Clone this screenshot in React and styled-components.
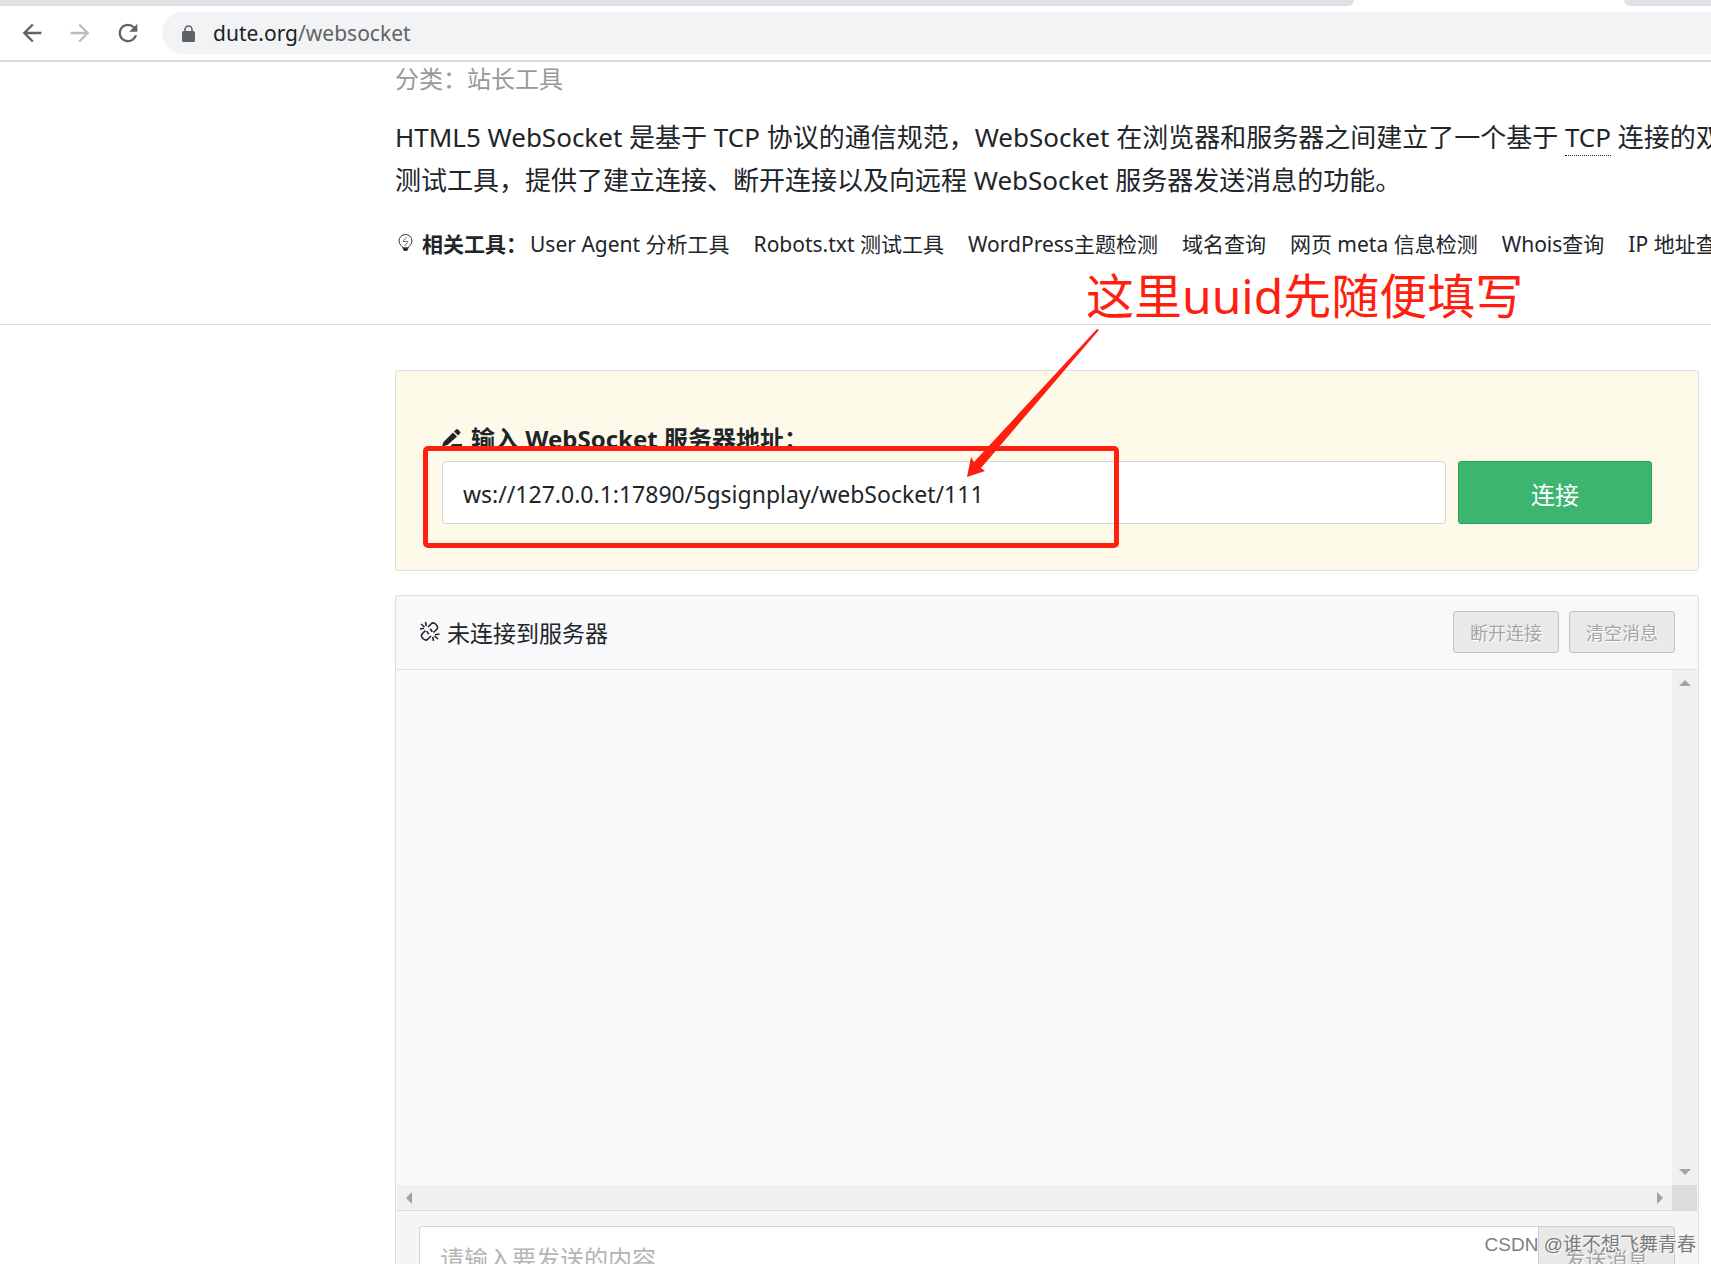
import React, { useState } from "react";
import styled, { createGlobalStyle } from "styled-components";
import { MdArrowBack, MdArrowForward, MdRefresh } from "react-icons/md";

const GlobalStyle = createGlobalStyle`
  * {
    box-sizing: border-box;
  }

  body {
    margin: 0;
    color: #212529;
    background: #fff;
    font-family: "Noto Sans", "Noto Sans CJK SC", sans-serif;
    font-size: 24px;
  }

  button,
  input {
    font-family: inherit;
  }

  svg {
    flex: none;
  }
`;

const Window = styled.div`
  display: flex;
  flex-direction: column;
  height: 100vh;
  overflow: hidden;
  position: relative;
`;

const TabStrip = styled.div`
  display: flex;
  flex: none;
  height: 6px;
  justify-content: space-between;
`;

const TabEdge = styled.div`
  background: #dee1e6;
  width: ${({ $last }) => ($last ? "87px" : "auto")};
  flex: ${({ $last }) => ($last ? "none" : "1")};
  margin-right: ${({ $last }) => ($last ? "0" : "270px")};
  border-radius: ${({ $last }) => ($last ? "0 0 0 8px" : "0 0 8px 0")};
`;

const Toolbar = styled.header`
  display: flex;
  flex: none;
  align-items: center;
  height: 56px;
  padding-left: 18px;
  border-bottom: 2px solid #dadbdc;
`;

const NavButton = styled.button`
  display: flex;
  padding: 0;
  margin-right: 20px;
  border: 0;
  background: none;
  color: ${({ disabled }) => (disabled ? "#babcbe" : "#5f6368")};
`;

const AddressBar = styled.div`
  display: flex;
  flex: 1;
  align-items: center;
  gap: 18px;
  height: 42px;
  padding-left: 20px;
  border-radius: 21px 0 0 21px;
  background: #f1f3f4;
  color: #5f6368;
  font-size: 21px;
`;

const Address = styled.div`
  & b {
    color: #202124;
    font-weight: 400;
  }
`;

const Page = styled.main`
  flex: none;
`;

const Intro = styled.section`
  height: 263px;
  padding-left: 395px;
  border-bottom: 1px solid #dcdcdc;
  overflow: hidden;
  white-space: nowrap;
`;

const Category = styled.div`
  line-height: 34px;
  color: #999;
`;

const Description = styled.p`
  margin: 20px 0;
  font-size: 26px;
  line-height: 43px;

  & abbr {
    border-bottom: 1px dotted #212529;
    text-decoration: none;
  }
`;

const Related = styled.nav`
  display: flex;
  align-items: center;
  height: 42px;
  font-size: 21px;

  & strong {
    margin: 0 3px 0 7px;
  }
`;

const ToolLink = styled.a`
  margin-right: 24px;
  color: #212529;
  text-decoration: none;
`;

const Content = styled.div`
  display: flex;
  flex-direction: column;
  gap: 24px;
  padding: 45px 12px 0 395px;
`;

const ConnectPanel = styled.form`
  position: relative;
  padding: 46px;
  border: 1px solid #dcdfe0;
  border-radius: 3px;
  background: #fdfaea;
`;

const AddressLabel = styled.label`
  display: flex;
  align-items: center;
  gap: 9px;
  height: 41px;
  margin-bottom: 3px;
  font-weight: 700;
`;

const Row = styled.div`
  display: flex;
  gap: ${({ $gap }) => $gap || 0}px;
`;

const TextInput = styled.input`
  flex: 1;
  min-width: 0;
  height: 63px;
  padding: 2px 20px 0;
  border: 1px solid #d1d5d9;
  border-radius: 4px;
  background: #fff;
  color: #212529;
  font-size: ${({ $size }) => $size || 24}px;
  outline: none;

  &::placeholder {
    color: #b5b5b5;
  }
`;

const ConnectButton = styled.button`
  width: 194px;
  padding-top: 2px;
  border: 1px solid #22a355;
  border-radius: 3px;
  background: #3cb66e;
  color: #fff;
  font-size: 24px;
`;

const MessagePanel = styled.section`
  padding: 0 1px;
  border: 1px solid #dcdfe0;
  border-radius: 3px;
  background: #f5f5f5;
`;

const PanelHeader = styled.div`
  display: flex;
  align-items: center;
  gap: 10px;
  height: 74px;
  padding: 0 22px 2px;
  border-bottom: 1px solid #dcdfe0;
  background: #f8f9fb;
`;

const Status = styled.div`
  display: flex;
  flex: 1;
  align-items: center;
  gap: 7px;
  font-size: 23px;
`;

const SmallButton = styled.button`
  width: 106px;
  height: 42px;
  padding: 0;
  border: 1px solid #c3c3c3;
  border-radius: 3px;
  background: #e9e9e9;
  color: #a5a5a5;
  font-size: 18px;
  text-shadow: 1px 1px 0 #fff;
`;

const MessageArea = styled.div`
  display: grid;
  grid-template-columns: 1fr 25px;
  grid-template-rows: 515px 26px;
`;

const Messages = styled.div`
  background: #fafafa;
`;

const ScrollTrack = styled.div`
  display: flex;
  flex-direction: ${({ $vertical }) => ($vertical ? "column" : "row")};
  align-items: center;
  justify-content: space-between;
  padding: ${({ $vertical }) => ($vertical ? "10px 0" : "0 9px")};
  border-bottom: ${({ $vertical }) => ($vertical ? "0" : "1px solid #dcdcdc")};
  background: #f0f0f0;
`;

const ScrollCorner = styled.div`
  background: #dcdcdc;
`;

const SendRow = styled.form`
  display: flex;
  padding: 15px 22px;

  & input {
    border-right: 0;
    border-radius: 4px 0 0 4px;
  }
`;

const SendButton = styled.button`
  width: 137px;
  border: 1px solid #c9cccd;
  border-radius: 0 4px 4px 0;
  background: #e9e9e9;
  color: #a5a5a5;
  font-size: 21px;
  text-shadow: 1px 1px 0 #fff;
`;

const Highlight = styled.div`
  position: absolute;
  top: 75px;
  left: 27px;
  width: 696px;
  height: 102px;
  border: 5px solid #ff1f10;
  border-radius: 5px;
  pointer-events: none;
`;

const Note = styled.div`
  position: absolute;
  top: -111px;
  left: 690px;
  color: #ff1f10;
  font-size: 48px;
  line-height: 72px;
  white-space: nowrap;
`;

const Arrow = styled.svg`
  position: absolute;
  top: -42px;
  left: 570px;
  pointer-events: none;
`;

const Watermark = styled.div`
  position: absolute;
  right: 15px;
  bottom: 4px;
  color: rgba(90, 90, 90, 0.8);
  font-family: "Liberation Sans", "Noto Sans CJK SC", sans-serif;
  font-size: 19px;
  line-height: 30px;
  text-shadow: 1px 1px 0 rgba(255, 255, 255, 0.8);
`;

const LockIcon = () => (
  <svg width="13" height="17" viewBox="0 0 13 17" fill="#5f6368">
    <rect y="6" width="13" height="11" rx="1.500" />
    <path
      d="M3 7V4.500a3.500 3.500 0 0 1 7 0V7"
      fill="none"
      stroke="#5f6368"
      strokeWidth="1.600"
    />
  </svg>
);

const BulbIcon = () => (
  <svg width="20" height="20" viewBox="0 0 20 20" fill="none" stroke="#333">
    <path d="M8 15C8 13.500 4 12 4 8a6.500 6.500 0 0 1 13 0c0 4-4 5.500-4 7z" />
    <path d="M8 15h5l-1 2.500h-3z" fill="#222" />
    <path d="M11.500 4L8 8.500h5L9.500 13" stroke="#777" />
  </svg>
);

const PencilIcon = () => (
  <svg width="20" height="20" viewBox="0 0 20 20" fill="#212529">
    <path d="M0 18.500L1.500 14 11 4.500l4 4L5.500 17zM12 3.500l2-2q1-1 2 0l2 2q1 1 0 2l-2 2zM10.500 16H20v2.500H8z" />
  </svg>
);

const BrokenLinkIcon = () => (
  <svg
    width="21"
    height="21"
    viewBox="0 0 21 21"
    fill="none"
    stroke="#212529"
    strokeWidth="1.600"
  >
    <path d="M9 6l3.500-3.500q2-1.500 4.500 1t1 4.500L14.500 11.500M11 8q2 1 2 3M12 15l-3.500 3.500q-2 1.500-4.500-1t-1-4.500L6.500 9.500M10 13q-2-1-2-3" />
    <path d="M6.500 1l.8 4M1 8l4-.8M2 3l3.500 3M14.500 20l-.8-4M20.500 13l-4.500.8M19 18l-3.500-3" />
  </svg>
);

const arrows = {
  up: "M0 6L6 0l6 6z",
  down: "M0 0h12L6 6z",
  left: "M6 0v12L0 6z",
  right: "M0 0l6 6-6 6z",
};

const ScrollArrow = ({ dir }) => {
  const vertical = dir === "up" || dir === "down";
  return (
    <svg width={vertical ? 12 : 6} height={vertical ? 6 : 12} fill="#a3a3a3">
      <path d={arrows[dir]} />
    </svg>
  );
};

const tools = [
  "User Agent 分析工具",
  "Robots.txt 测试工具",
  "WordPress主题检测",
  "域名查询",
  "网页 meta 信息检测",
  "Whois查询",
  "IP 地址查询",
];

const App = () => {
  const [url, setUrl] = useState(
    "ws://127.0.0.1:17890/5gsignplay/webSocket/111"
  );

  return (
    <Window>
      <GlobalStyle />
      <TabStrip>
        <TabEdge />
        <TabEdge $last />
      </TabStrip>
      <Toolbar>
        <NavButton aria-label="后退">
          <MdArrowBack size={28} />
        </NavButton>
        <NavButton aria-label="前进" disabled>
          <MdArrowForward size={28} />
        </NavButton>
        <NavButton aria-label="刷新">
          <MdRefresh size={28} />
        </NavButton>
        <AddressBar>
          <LockIcon />
          <Address>
            <b>dute.org</b>/websocket
          </Address>
        </AddressBar>
      </Toolbar>

      <Page>
        <Intro>
          <Category>分类：站长工具</Category>
          <Description>
            HTML5 WebSocket 是基于 TCP 协议的通信规范，WebSocket
            在浏览器和服务器之间建立了一个基于 <abbr>TCP</abbr> 连接的双
            <br />
            测试工具，提供了建立连接、断开连接以及向远程 WebSocket
            服务器发送消息的功能。
          </Description>
          <Related>
            <BulbIcon />
            <strong>相关工具：</strong>
            {tools.map((tool) => (
              <ToolLink href="#" key={tool}>
                {tool}
              </ToolLink>
            ))}
          </Related>
        </Intro>

        <Content>
          <ConnectPanel onSubmit={(e) => e.preventDefault()}>
            <AddressLabel htmlFor="url">
              <PencilIcon />
              输入 WebSocket 服务器地址：
            </AddressLabel>
            <Row $gap={12}>
              <TextInput
                id="url"
                $size={23}
                value={url}
                onChange={(e) => setUrl(e.target.value)}
              />
              <ConnectButton>连接</ConnectButton>
            </Row>
            <Highlight />
            <Note>这里uuid先随便填写</Note>
            <Arrow width="134" height="152" viewBox="0 0 134 152">
              <path
                d="M131 0L133 1L15 139L19 142L1 148L5 128L8 133Z"
                fill="#ff1f10"
              />
            </Arrow>
          </ConnectPanel>

          <MessagePanel>
            <PanelHeader>
              <Status>
                <BrokenLinkIcon />
                未连接到服务器
              </Status>
              <SmallButton disabled>断开连接</SmallButton>
              <SmallButton disabled>清空消息</SmallButton>
            </PanelHeader>
            <MessageArea>
              <Messages />
              <ScrollTrack $vertical>
                <ScrollArrow dir="up" />
                <ScrollArrow dir="down" />
              </ScrollTrack>
              <ScrollTrack>
                <ScrollArrow dir="left" />
                <ScrollArrow dir="right" />
              </ScrollTrack>
              <ScrollCorner />
            </MessageArea>
            <SendRow onSubmit={(e) => e.preventDefault()}>
              <TextInput
                aria-label="消息内容"
                placeholder="请输入要发送的内容"
              />
              <SendButton disabled>发送消息</SendButton>
            </SendRow>
          </MessagePanel>
        </Content>
      </Page>
      <Watermark>CSDN @谁不想飞舞青春</Watermark>
    </Window>
  );
};

export default App;
